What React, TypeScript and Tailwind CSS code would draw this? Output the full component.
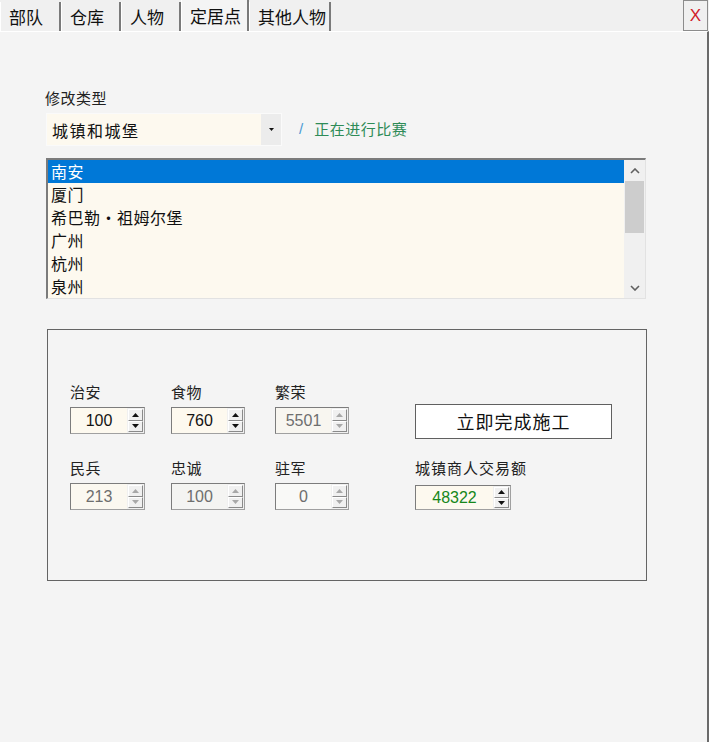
import React from "react";

const cjk = "font-['Noto_Sans_CJK_SC','Noto_Sans',sans-serif]";
const num = "font-['Liberation_Sans','Noto_Sans',sans-serif]";

function Tab({ label, active, w }: { label: string; active?: boolean; w: string }) {
  return (
    <div
      className={`${w} flex items-center pl-[8px] text-[17px] text-[#111] border-r-2 border-r-[#7a7a7a] border-l border-l-white ${
        active ? "h-[31px] bg-[#f4f4f4]" : "h-[29px] bg-[#f0f0f0]"
      }`}
    >
      {label}
    </div>
  );
}

function Arrow({ up, dim }: { up?: boolean; dim?: boolean }) {
  return (
    <svg width="7" height="4" viewBox="0 0 7 4">
      <path d={up ? "M0 4 L3.5 0 L7 4 Z" : "M0 0 L3.5 4 L7 0 Z"} fill={dim ? "#a8a8a8" : "#111"} />
    </svg>
  );
}

function SpinBtn({ up, dim }: { up?: boolean; dim?: boolean }) {
  return (
    <div className="flex-1 flex items-center justify-center bg-[#f0f0f0] border border-t-white border-l-white border-r-[#8a8a8a] border-b-[#8a8a8a]">
      <Arrow up={up} dim={dim} />
    </div>
  );
}

function Spin({
  value,
  dim,
  w = "w-[75px]",
  h = "h-[27px]",
  bg = "bg-[#fdf9ef]",
  color,
}: {
  value: string;
  dim?: boolean;
  w?: string;
  h?: string;
  bg?: string;
  color?: string;
}) {
  return (
    <div className={`${w} ${h} flex border border-[#7c7c7c] border-r-[#a0a0a0] border-b-[#a0a0a0] ${bg}`}>
      <div
        className={`flex-1 flex items-center justify-center ${num} text-[16px] ${
          color ? color : dim ? "text-[#6e6e6e]" : "text-[#141414] font-medium"
        }`}
      >
        {value}
      </div>
      <div className="w-[17px] flex flex-col p-[1px] bg-[#f0f0f0]">
        <SpinBtn up dim={dim} />
        <SpinBtn dim={dim} />
      </div>
    </div>
  );
}

function Field({ label, children }: { label: string; children: React.ReactNode }) {
  return (
    <div className="flex flex-col">
      <div className="h-[20px] leading-[20px] text-[15px] tracking-[0.5px] text-[#222]">{label}</div>
      <div className="mt-[5px]">{children}</div>
    </div>
  );
}

const towns = ["南安", "厦门", "希巴勒·祖姆尔堡", "广州", "杭州", "泉州"];

export default function App() {
  return (
    <div className={`w-[709px] h-[742px] bg-[#f4f4f4] flex flex-col ${cjk}`}>
      {/* tab strip */}
      <div className="h-[31px] flex items-end bg-[#f0f0f0] relative">
        <Tab label="部队" w="w-[61px]" />
        <Tab label="仓库" w="w-[60px]" />
        <Tab label="人物" w="w-[60px]" />
        <Tab label="定居点" w="w-[68px]" active />
        <Tab label="其他人物" w="w-[82px]" />
        <div className="absolute right-[1px] top-0 w-[25px] h-[31px] border border-[#8c8c8c] bg-[#f0f0f0] flex items-center justify-center text-[17px] text-[#d0202a] font-['Liberation_Sans',sans-serif]">
          X
        </div>
      </div>

      {/* page */}
      <div className="flex-1 border-t border-t-white border-r-2 border-r-[#6a6a6a] pl-[46px] pt-[56px] pr-[62px]">
        <div className="ml-[-1px] h-[20px] leading-[20px] text-[15px] tracking-[0.5px] text-[#222]">修改类型</div>

        <div className="mt-[5px] flex items-center">
          <div className="w-[236px] h-[33px] bg-[#fdf9ef] flex border border-[#fafafa]">
            <div className="flex-1 flex items-center pl-[5px] text-[16px] tracking-[1.5px] text-[#111]">城镇和城堡</div>
            <div className="w-[20px] bg-[#ececec] flex items-center justify-center">
              <svg width="5" height="3" viewBox="0 0 5 3">
                <path d="M0 0 L2.5 3 L5 0 Z" fill="#111" />
              </svg>
            </div>
          </div>
          <span className="ml-[17px] text-[15px] text-[#4a9ad4] font-['Liberation_Sans',sans-serif]">/</span>
          <span className="ml-[11px] text-[15px] tracking-[0.5px] text-[#2e8b57]">正在进行比赛</span>
        </div>

        {/* town list */}
        <div className="mt-[12px] w-[600px] h-[141px] flex border-t-2 border-l-2 border-t-[#7b7b7b] border-l-[#7b7b7b] border-r border-b border-r-[#e2e2e2] border-b-[#e2e2e2] bg-[#fdf9ef]">
          <div className="flex-1 flex flex-col">
            {towns.map((t, i) => (
              <div
                key={t}
                className={`h-[23px] leading-[23px] pl-[3px] text-[16px] tracking-[0.5px] ${
                  i === 0 ? "bg-[#0078d7] text-white" : "text-[#111]"
                }`}
              >
                {t}
              </div>
            ))}
          </div>
          <div className="w-[21px] bg-[#f0f0f0] flex flex-col items-center">
            <div className="h-[21px] flex items-center justify-center">
              <svg width="10" height="6" viewBox="0 0 10 6">
                <path d="M1 5 L5 1 L9 5" stroke="#606060" strokeWidth="1.6" fill="none" />
              </svg>
            </div>
            <div className="w-[19px] h-[52px] bg-[#cdcdcd]" />
            <div className="flex-1" />
            <div className="h-[21px] flex items-center justify-center">
              <svg width="10" height="6" viewBox="0 0 10 6">
                <path d="M1 1 L5 5 L9 1" stroke="#606060" strokeWidth="1.6" fill="none" />
              </svg>
            </div>
          </div>
        </div>

        {/* stats group */}
        <div className="mt-[30px] ml-[1px] w-[600px] h-[252px] border border-[#646464] pl-[22px] pt-[52px]">
          <div className="grid grid-cols-[101px_104px_140px_auto] gap-y-[19px]">
            <Field label="治安">
              <Spin value="100" />
            </Field>
            <Field label="食物">
              <Spin value="760" w="w-[74px]" />
            </Field>
            <Field label="繁荣">
              <Spin value="5501" dim w="w-[74px]" bg="bg-[#f8f6f0]" />
            </Field>
            <div className="pt-[22px]">
              <div className="w-[197px] h-[35px] bg-white border border-[#606060] flex items-center justify-center text-[18px] tracking-[1px] text-[#111]">
                立即完成施工
              </div>
            </div>

            <Field label="民兵">
              <Spin value="213" dim bg="bg-[#fbf8f0]" />
            </Field>
            <Field label="忠诚">
              <Spin value="100" dim w="w-[74px]" bg="bg-[#f4f4f2]" />
            </Field>
            <Field label="驻军">
              <Spin value="0" dim w="w-[74px]" bg="bg-[#f9f9f7]" />
            </Field>
            <div className="flex flex-col">
              <div className="h-[20px] leading-[20px] text-[15px] tracking-[1px] text-[#222]">城镇商人交易额</div>
              <div className="mt-[7px]">
                <Spin value="48322" w="w-[96px]" h="h-[25px]" color="text-[#16871a]" />
              </div>
            </div>
          </div>
        </div>
      </div>
    </div>
  );
}
